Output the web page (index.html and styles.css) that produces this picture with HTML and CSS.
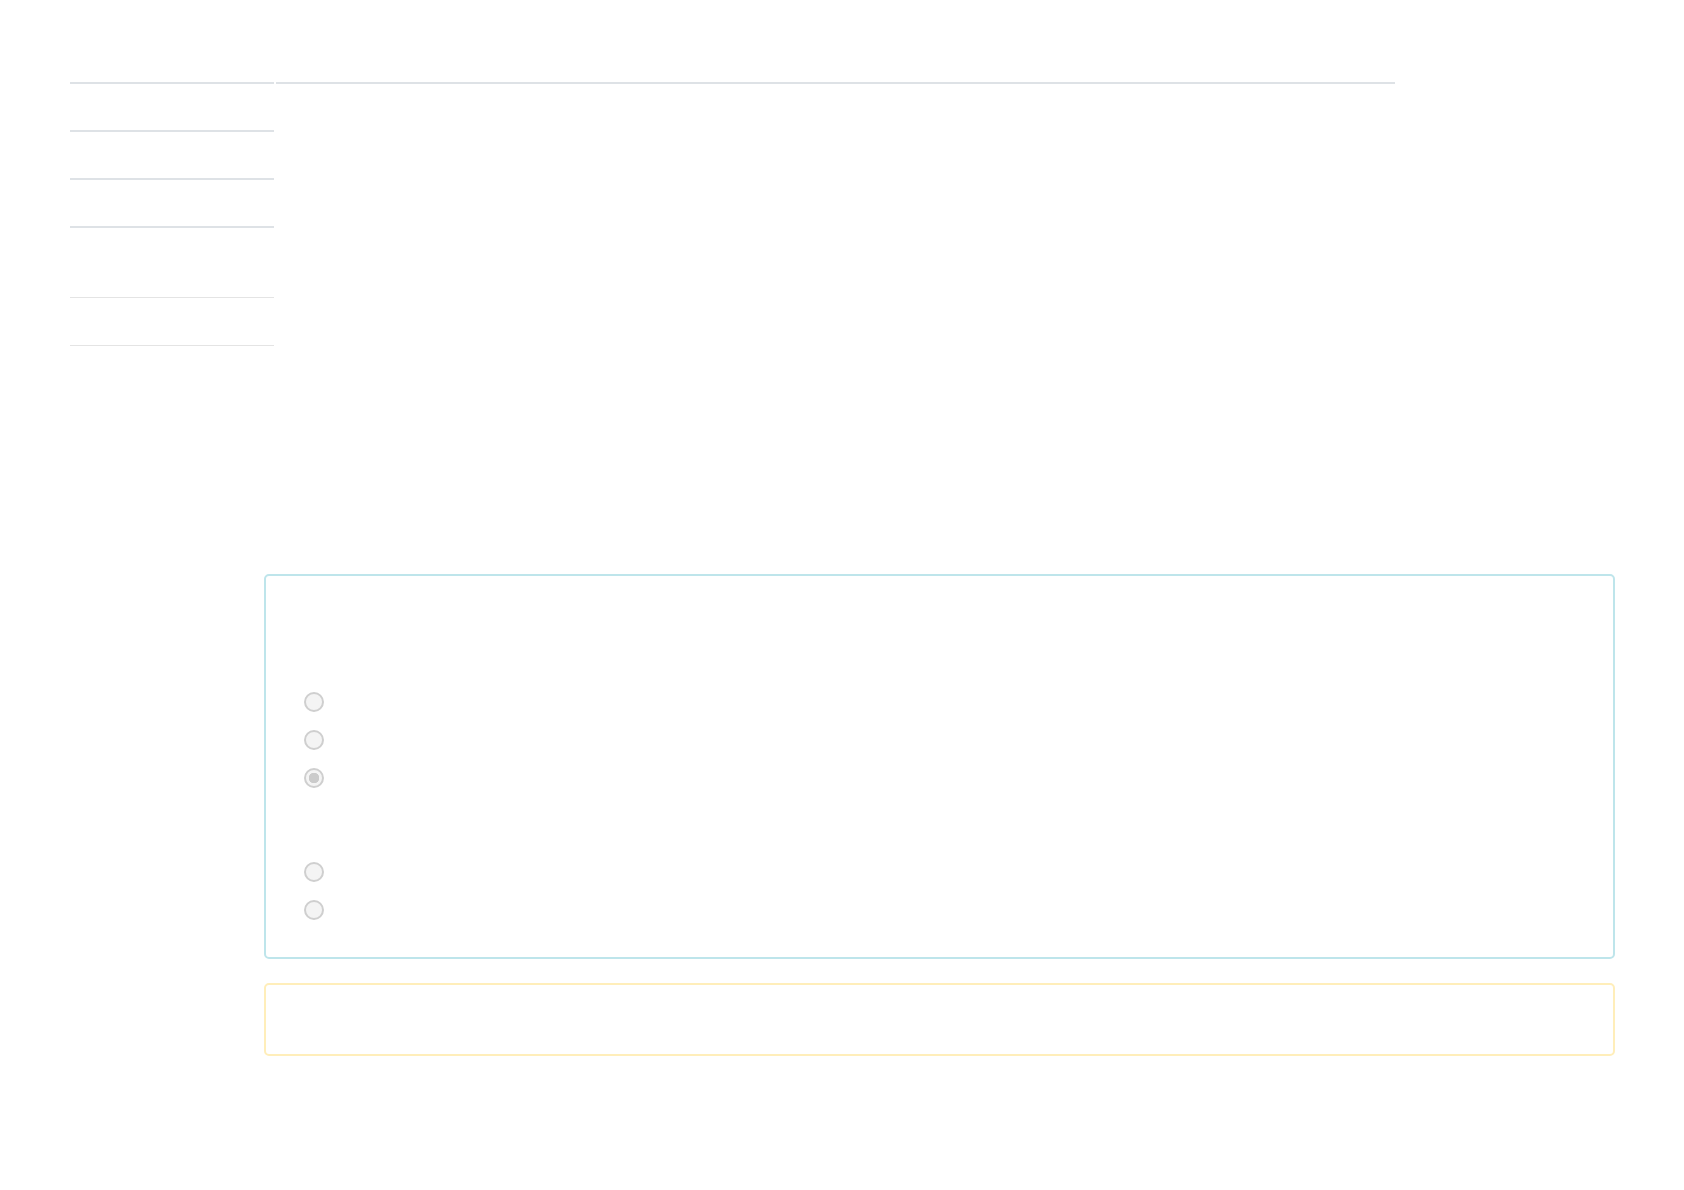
FILE: index.html
```html
<!DOCTYPE html>
<html lang="en">
<head>
    <meta charset="UTF-8">
    <meta name="viewport" content="width=device-width, initial-scale=1.0">
    <title>Settings</title>
    <link rel="stylesheet" href="styles.css">
</head>
<body>

<div class="page">
    <div class="top">
        <div class="side">
            <ul class="side-nav">
                <li></li>
                <li></li>
                <li class="last"></li>
            </ul>
            <ul class="side-extra">
                <li></li>
            </ul>
        </div>
        <div class="main-rule"></div>
    </div>

    <div class="panels">
        <form class="panel panel-info">
            <div class="choice-group">
                <label class="choice"><input type="radio" name="a" disabled></label>
                <label class="choice"><input type="radio" name="a" disabled></label>
                <label class="choice"><input type="radio" name="a" checked disabled></label>
            </div>
            <div class="choice-group">
                <label class="choice"><input type="radio" name="b" disabled></label>
                <label class="choice"><input type="radio" name="b" disabled></label>
            </div>
        </form>
        <div class="panel panel-warning"></div>
    </div>
</div>

</body>
</html>
```

FILE: styles.css
```css
body {
    background-color: #fff;
    color: #fff;
    font-family: "Liberation Sans", Arial, sans-serif;
    margin: 0;
    padding: 0;
}
ul {
    list-style: none;
    margin: 0;
    padding: 0;
}
.page {
    padding: 82px 69px 0 70px;
}
.top {
    display: flex;
    gap: 2px;
    align-items: flex-start;
}
.side {
    width: 204px;
}
.side-nav li {
    height: 46px;
    border-top: 2px solid #dee2e6;
}
.side-nav li.last {
    border-bottom: 2px solid #dee2e6;
}
.side-extra {
    margin-top: 69px;
}
.side-extra li {
    height: 47px;
    border-top: 1px solid #e4e4e4;
    border-bottom: 1px solid #e4e4e4;
}
.main-rule {
    width: 1119px;
    border-top: 2px solid #dee2e6;
}
.panels {
    margin: 228px 0 0 194px;
}
.panel {
    border: 2px solid #bee5eb;
    border-radius: 5px;
    box-sizing: border-box;
}
.panel-info {
    height: 385px;
    padding: 107px 0 0 38px;
}
.panel-warning {
    margin-top: 24px;
    height: 73px;
    border-color: #ffeeba;
}
.choice-group + .choice-group {
    margin-top: 56px;
}
.choice {
    display: flex;
    align-items: center;
    height: 38px;
}
.choice input {
    appearance: none;
    -webkit-appearance: none;
    margin: 0;
    width: 20px;
    height: 20px;
    border: 2px solid #cfcfcf;
    border-radius: 50%;
    background-color: #f4f4f4;
    box-sizing: border-box;
}
.choice input:checked {
    background: radial-gradient(circle, #cbcbcb 0 5px, #f4f4f4 5.5px);
}
```
